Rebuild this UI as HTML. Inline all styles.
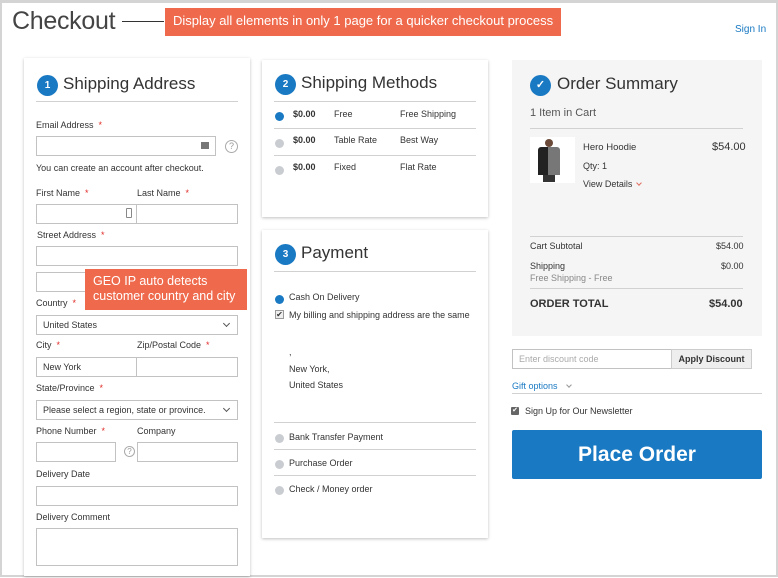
<!DOCTYPE html>
<html><head><meta charset="utf-8"><style>
*{margin:0;padding:0;box-sizing:border-box}
body{width:778px;height:578px;background:#fff;font-family:"Liberation Sans",sans-serif;color:#333;position:relative;overflow:hidden}
.a{position:absolute;white-space:nowrap}
.frame{position:absolute;left:0;top:0;width:778px;height:577px;border:2px solid #d4d4d4;border-top:3px solid #d4d4d4}
.box{position:absolute;background:#fff;box-shadow:0 1px 3px rgba(0,0,0,.25)}
.in{position:absolute;border:1px solid #c2c2c2;background:#fff;height:20px}
.lb{position:absolute;font-size:9px;color:#333;white-space:nowrap}
.lb i{color:#e02b27;font-style:normal;margin-left:5px}
.circ{position:absolute;width:21px;height:21px;border-radius:50%;background:#1979c3;color:#fff;font-size:10px;font-weight:bold;text-align:center;line-height:21px}
.h{position:absolute;font-size:17px;color:#333;white-space:nowrap}
.hr{position:absolute;height:1px;background:#d1d1d1}
.rad{position:absolute;width:9px;height:9px;border-radius:50%;background:#c9ccd1}
.rad.on{background:#1979c3}
.t9{font-size:9px;position:absolute;white-space:nowrap}
.sel::after{content:"";position:absolute;right:8px;top:5px;width:4px;height:4px;border-right:1px solid #555;border-bottom:1px solid #555;transform:rotate(45deg)}
.q{position:absolute;width:13px;height:13px;border:1px solid #aaa;border-radius:50%;font-size:9px;color:#999;text-align:center;line-height:11px}
.chev{display:inline-block;width:4px;height:4px;border-right:1px solid #999;border-bottom:1px solid #999;transform:rotate(45deg);margin-left:5px;position:relative;top:-2px}
</style></head><body>
<div class="frame"></div>
<div class="a" style="left:12px;top:7px;font-size:25px;color:#444;letter-spacing:-0.3px">Checkout</div>
<div class="a" style="left:122px;top:21px;width:42px;height:1px;background:#333"></div>
<div class="a" style="left:165px;top:8px;width:396px;height:28px;background:#ef6a4c;color:#fff;font-size:13px;line-height:26px;padding-left:8px">Display all elements in only 1 page for a quicker checkout process</div>
<div class="a" style="left:735px;top:24px;font-size:10px;color:#1979c3">Sign In</div>

<!-- left -->
<div class="box" style="left:24px;top:58px;width:226px;height:518px"></div>
<div class="circ" style="left:37px;top:75px">1</div>
<div class="h" style="left:63px;top:74px">Shipping Address</div>
<div class="hr" style="left:36px;top:101px;width:202px"></div>
<div class="lb" style="left:36px;top:120px">Email Address<i>*</i></div>
<div class="in" style="left:36px;top:136px;width:180px"></div>
<div class="a" style="left:201px;top:142px;width:8px;height:7px;background:#777"></div>
<div class="q" style="left:225px;top:140px">?</div>
<div class="lb" style="left:36px;top:163px">You can create an account after checkout.</div>
<div class="lb" style="left:36px;top:188px">First Name<i>*</i></div>
<div class="lb" style="left:137px;top:188px">Last Name<i>*</i></div>
<div class="in" style="left:36px;top:204px;width:101px"></div>
<div class="a" style="left:126px;top:208px;width:6px;height:10px;border:1px solid #888;border-radius:1px"></div>
<div class="in" style="left:136px;top:204px;width:102px"></div>
<div class="lb" style="left:37px;top:230px">Street Address<i>*</i></div>
<div class="in" style="left:36px;top:246px;width:202px"></div>
<div class="in" style="left:36px;top:272px;width:60px"></div>
<div class="a" style="left:85px;top:269px;width:162px;height:41px;background:#ef6a4c;color:#fff;font-size:12.5px;line-height:15px;padding:5px 0 0 8px">GEO IP auto detects<br>customer country and city</div>
<div class="lb" style="left:36px;top:298px">Country<i>*</i></div>
<div class="in sel" style="left:36px;top:315px;width:202px;font-size:9px;line-height:18px;padding-left:6px">United States</div>
<div class="lb" style="left:36px;top:340px">City<i>*</i></div>
<div class="lb" style="left:137px;top:340px">Zip/Postal Code<i>*</i></div>
<div class="in" style="left:36px;top:357px;width:101px;font-size:9px;line-height:18px;padding-left:6px">New York</div>
<div class="in" style="left:136px;top:357px;width:102px"></div>
<div class="lb" style="left:36px;top:383px">State/Province<i>*</i></div>
<div class="in sel" style="left:36px;top:400px;width:202px;font-size:9px;line-height:18px;padding-left:6px">Please select a region, state or province.</div>
<div class="lb" style="left:36px;top:426px">Phone Number<i>*</i></div>
<div class="lb" style="left:137px;top:426px">Company</div>
<div class="in" style="left:36px;top:442px;width:80px"></div>
<div class="q" style="left:124px;top:446px;width:11px;height:11px;font-size:8px;line-height:9px">?</div>
<div class="in" style="left:137px;top:442px;width:101px"></div>
<div class="lb" style="left:36px;top:469px">Delivery Date</div>
<div class="in" style="left:36px;top:486px;width:202px"></div>
<div class="lb" style="left:36px;top:512px">Delivery Comment</div>
<div class="in" style="left:36px;top:528px;width:202px;height:38px"></div>

<!-- middle -->
<div class="box" style="left:262px;top:60px;width:226px;height:157px"></div>
<div class="circ" style="left:275px;top:74px">2</div>
<div class="h" style="left:301px;top:73px">Shipping Methods</div>
<div class="hr" style="left:274px;top:101px;width:202px"></div>
<div class="rad on" style="left:275px;top:112px"></div>
<div class="t9" style="left:293px;top:109px;font-weight:bold">$0.00</div>
<div class="t9" style="left:334px;top:109px">Free</div>
<div class="t9" style="left:400px;top:109px">Free Shipping</div>
<div class="hr" style="left:274px;top:128px;width:202px"></div>
<div class="rad" style="left:275px;top:139px"></div>
<div class="t9" style="left:293px;top:135px;font-weight:bold">$0.00</div>
<div class="t9" style="left:334px;top:135px">Table Rate</div>
<div class="t9" style="left:400px;top:135px">Best Way</div>
<div class="hr" style="left:274px;top:155px;width:202px"></div>
<div class="rad" style="left:275px;top:166px"></div>
<div class="t9" style="left:293px;top:162px;font-weight:bold">$0.00</div>
<div class="t9" style="left:334px;top:162px">Fixed</div>
<div class="t9" style="left:400px;top:162px">Flat Rate</div>

<div class="box" style="left:262px;top:230px;width:226px;height:308px"></div>
<div class="circ" style="left:275px;top:244px">3</div>
<div class="h" style="left:301px;top:243px">Payment</div>
<div class="hr" style="left:274px;top:271px;width:202px"></div>
<div class="rad on" style="left:275px;top:295px"></div>
<div class="t9" style="left:289px;top:292px">Cash On Delivery</div>
<div class="a" style="left:275px;top:310px;width:9px;height:9px;border:1px solid #999;background:#eee;font-size:8px;line-height:7px;text-align:center">✔</div>
<div class="t9" style="left:289px;top:310px">My billing and shipping address are the same</div>
<div class="t9" style="left:289px;top:347px">,</div>
<div class="t9" style="left:289px;top:364px">New York,</div>
<div class="t9" style="left:289px;top:380px">United States</div>
<div class="hr" style="left:274px;top:422px;width:202px"></div>
<div class="rad" style="left:275px;top:434px"></div>
<div class="t9" style="left:289px;top:432px">Bank Transfer Payment</div>
<div class="hr" style="left:274px;top:449px;width:202px"></div>
<div class="rad" style="left:275px;top:460px"></div>
<div class="t9" style="left:289px;top:458px">Purchase Order</div>
<div class="hr" style="left:274px;top:475px;width:202px"></div>
<div class="rad" style="left:275px;top:486px"></div>
<div class="t9" style="left:289px;top:484px">Check / Money order</div>

<!-- right -->
<div class="a" style="left:512px;top:60px;width:250px;height:276px;background:#f5f5f5"></div>
<div class="circ" style="left:530px;top:75px;font-size:11px">✓</div>
<div class="h" style="left:557px;top:74px">Order Summary</div>
<div class="a" style="left:530px;top:107px;font-size:11px;color:#555">1 Item in Cart</div>
<div class="hr" style="left:530px;top:128px;width:213px"></div>
<div class="a" style="left:530px;top:137px;width:45px;height:46px;background:#fff"></div>
<div class="a" style="left:545px;top:139px;width:8px;height:8px;border-radius:50%;background:#6b4a3a"></div>
<div class="a" style="left:538px;top:147px;width:22px;height:28px;background:linear-gradient(90deg,#222 45%,#777 45%);border-radius:3px 3px 0 0"></div>
<div class="a" style="left:543px;top:175px;width:12px;height:7px;background:#333"></div>
<div class="t9" style="left:583px;top:142px;font-size:9.5px">Hero Hoodie</div>
<div class="a" style="left:712px;top:141px;font-size:11px">$54.00</div>
<div class="t9" style="left:583px;top:161px">Qty: 1</div>
<div class="t9" style="left:583px;top:179px">View Details<span class="chev" style="border-color:#e07060"></span></div>
<div class="hr" style="left:530px;top:236px;width:213px"></div>
<div class="t9" style="left:530px;top:241px">Cart Subtotal</div>
<div class="t9" style="left:716px;top:241px">$54.00</div>
<div class="t9" style="left:530px;top:261px">Shipping</div>
<div class="t9" style="left:721px;top:261px">$0.00</div>
<div class="t9" style="left:530px;top:273px;color:#888">Free Shipping - Free</div>
<div class="hr" style="left:530px;top:288px;width:213px"></div>
<div class="a" style="left:530px;top:298px;font-size:11px;font-weight:bold">ORDER TOTAL</div>
<div class="a" style="left:709px;top:298px;font-size:11px;font-weight:bold">$54.00</div>

<div class="in" style="left:512px;top:349px;width:160px;font-size:9px;color:#aaa;line-height:18px;padding-left:6px">Enter discount code</div>
<div class="a" style="left:671px;top:349px;width:81px;height:20px;background:#eee;border:1px solid #ccc;font-size:9px;font-weight:bold;text-align:center;line-height:18px">Apply Discount</div>
<div class="t9" style="left:512px;top:381px;color:#1979c3">Gift options <span class="chev" style="margin-left:7px"></span></div>
<div class="hr" style="left:512px;top:393px;width:250px"></div>
<div class="a" style="left:511px;top:407px;width:8px;height:8px;background:#666;border-radius:1px;color:#fff;font-size:7px;line-height:8px;text-align:center">✔</div>
<div class="t9" style="left:525px;top:406px">Sign Up for Our Newsletter</div>
<div class="a" style="left:512px;top:430px;width:250px;height:49px;background:#1979c3;border-radius:2px;color:#fff;font-size:21px;font-weight:bold;text-align:center;line-height:49px">Place Order</div>
</body></html>
